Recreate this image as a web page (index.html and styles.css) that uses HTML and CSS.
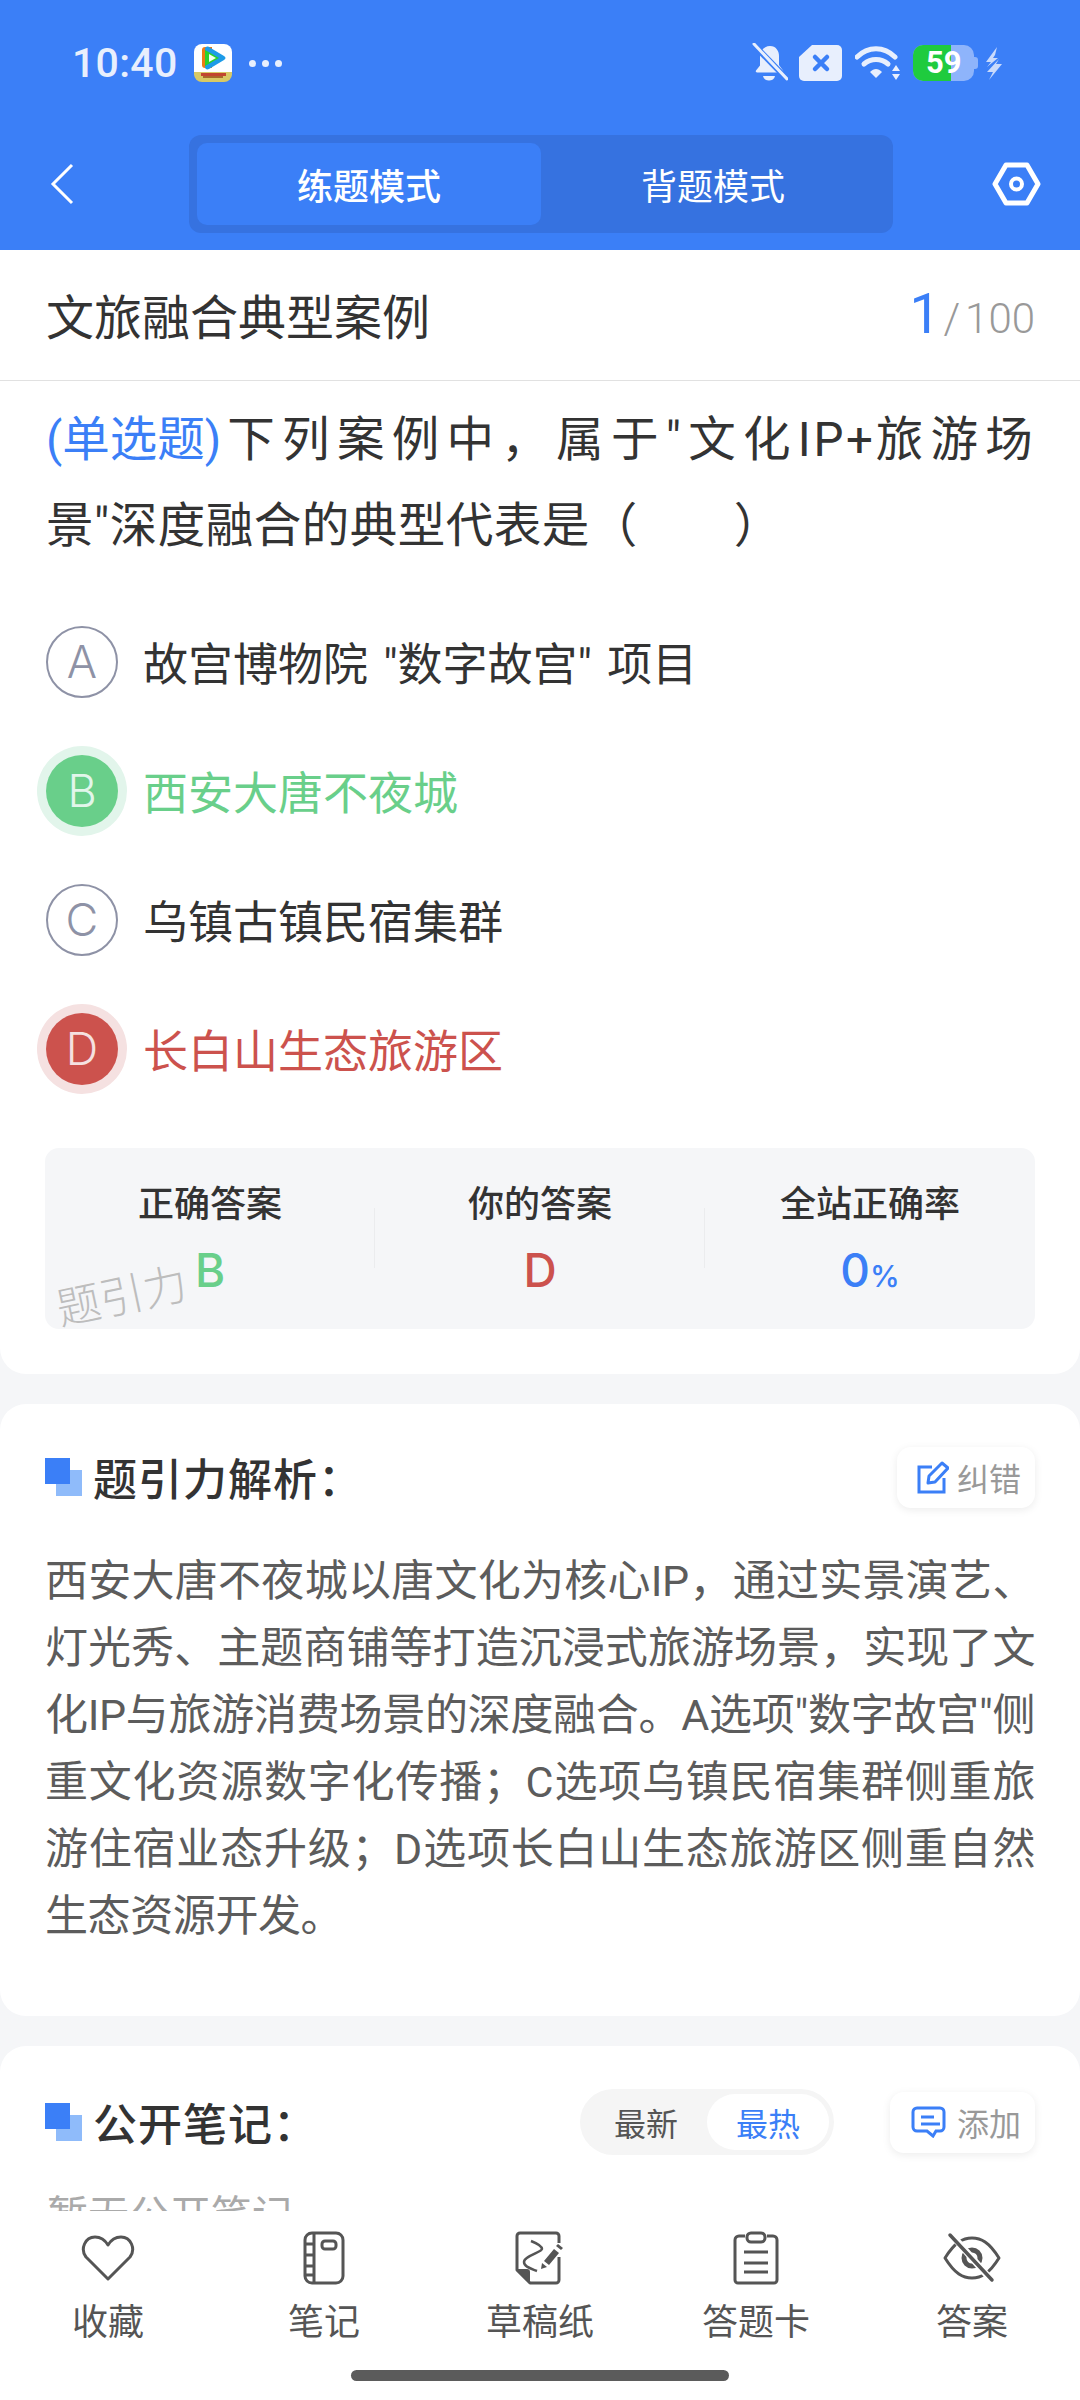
FILE: index.html
```html
<!DOCTYPE html>
<html lang="zh-CN">
<head>
<meta charset="utf-8">
<title>文旅融合典型案例</title>
<link rel="stylesheet" href="styles.css">
</head>
<body>
<div class="phone">
  <header class="top">
    <div class="status">
      <div class="status-left">
        <span class="time">10:40</span>
        <svg class="app-icon" width="38" height="38" viewBox="0 0 38 38"><rect width="38" height="36" rx="8" fill="#fff"/><path d="M0 28h38v2a8 8 0 0 1-8 8H8a8 8 0 0 1-8-8z" fill="#d8c964"/><path d="M11 3h7v21h-7a3 3 0 0 1-3-3V6a3 3 0 0 1 3-3z" fill="#ee7a14"/><path d="M11 5c0-2 2-3 4-2l15 9c2 1 2 3 0 4l-15 9c-2 1-4 0-4-2z" fill="#1d9be8"/><path d="M11 6l14 8-14 8z" fill="#2bd12b"/><path d="M15 10l7 4-7 4z" fill="#f4fff0"/><rect x="7" y="29" width="25" height="3" fill="#c2452f"/><rect x="9" y="32" width="20" height="2" fill="#a8682a"/></svg>
        <span class="dots"><i></i><i></i><i></i></span>
      </div>
      <div class="status-right">
        <svg width="36" height="40" viewBox="0 0 36 40"><path d="M18 3c6 0 9 5 9 10v9l4 5.500c.6 1 0 2-1 2H5c-1 0-1.600-1-1-2l4-5V13c0-5 4-10 10-10z" fill="#e8effd"/><path d="M11 33h12c-1 6-11 6-12 0z" fill="#e8effd"/><path d="M0 0l34 35" stroke="#3b7ff7" stroke-width="6"/><path d="M2 1l33 35" stroke="#e8effd" stroke-width="3" stroke-linecap="round"/></svg>
        <svg width="43" height="36" viewBox="0 0 43 36"><path d="M13 0h25a5 5 0 0 1 5 5v26a5 5 0 0 1-5 5H5a5 5 0 0 1-5-5V12z" fill="#e8effd"/><path d="M16 12l12 12M28 12L16 24" stroke="#3b7ff7" stroke-width="4.500" stroke-linecap="round"/></svg>
        <svg class="wifi" width="47" height="36" viewBox="0 0 47 36"><path d="M2 12c11-11 27-11 38 0" fill="none" stroke="#e8effd" stroke-width="5" stroke-linecap="round"/><path d="M9 19c7-6 17-6 24 0" fill="none" stroke="#e8effd" stroke-width="5" stroke-linecap="round"/><path d="M15 27c4-4 8-4 12 0l-6 6z" fill="#e8effd"/><path d="M41 20l4 6h-8zM41 35l4-6h-8z" fill="#e8effd"/></svg>
        <div class="battery"><div class="batt-body"><span class="batt-fill"></span></div><span class="batt-num">59</span></div>
        <svg class="bolt" width="17" height="33" viewBox="0 0 17 33"><path d="M12 0L1 15h5l-4 5 11-9H8l2-3zM14 12L2 25h6l-4 8 13-16h-6z" fill="#c9dafb"/></svg>
      </div>
    </div>
    <div class="nav">
      <svg class="back" width="24" height="42" viewBox="0 0 24 42"><path d="M22 2L3 21l19 19" fill="none" stroke="#fff" stroke-width="3"/></svg>
      <div class="tabs">
        <span class="tab tab-on">练题模式</span>
        <span class="tab">背题模式</span>
      </div>
      <svg class="gear" width="49" height="44" viewBox="0 0 49 44"><path d="M14 3h21l11 19-11 19H14L3 22z" fill="none" stroke="#fff" stroke-width="5" stroke-linejoin="round"/><circle cx="24.500" cy="22" r="5.500" fill="none" stroke="#fff" stroke-width="4"/></svg>
    </div>
  </header>

  <main class="content">
    <section class="card card-question">
      <div class="title-row">
        <span class="title">文旅融合典型案例</span>
        <span class="count"><b>1</b><i>/</i>100</span>
      </div>
      <p class="question"><span class="q-type">(单选题)</span><span class="q-first">下列案例中，属于"文化<span class="q-latin">IP+</span>旅游场</span><br>景"深度融合的典型代表是（　　）</p>
      <ul class="options">
        <li class="option"><span class="badge">A</span><span>故宫博物院 "数字故宫" 项目</span></li>
        <li class="option right"><span class="badge">B</span><span>西安大唐不夜城</span></li>
        <li class="option"><span class="badge">C</span><span>乌镇古镇民宿集群</span></li>
        <li class="option wrong"><span class="badge">D</span><span>长白山生态旅游区</span></li>
      </ul>
      <div class="stats">
        <div class="stat"><span class="stat-label">正确答案</span><span class="stat-val green">B</span></div>
        <div class="stat"><span class="stat-label">你的答案</span><span class="stat-val red">D</span></div>
        <div class="stat"><span class="stat-label">全站正确率</span><span class="stat-val blue">0<small>%</small></span></div>
        <span class="watermark">题引力</span>
      </div>
    </section>

    <section class="card card-analysis">
      <div class="head">
        <span class="mark"></span>
        <h2>题引力解析：</h2>
        <span class="chip">
          <svg width="32" height="33" viewBox="0 0 32 33"><path d="M15 6H2v25h25V17" fill="none" stroke="#3b7ff7" stroke-width="3"/><path d="M11 22l1-7L25 2l6 5-13 14z" fill="none" stroke="#3b7ff7" stroke-width="3" stroke-linejoin="round"/></svg>
          纠错
        </span>
      </div>
      <p class="analysis">西安大唐不夜城以唐文化为核心IP，通过实景演艺、灯光秀、主题商铺等打造沉浸式旅游场景，实现了文化IP与旅游消费场景的深度融合。A选项"数字故宫"侧重文化资源数字化传播；C选项乌镇民宿集群侧重旅游住宿业态升级；D选项长白山生态旅游区侧重自然生态资源开发。</p>
    </section>

    <section class="card card-notes">
      <div class="head">
        <span class="mark"></span>
        <h2>公开笔记：</h2>
        <div class="switch"><span>最新</span><span class="switch-on">最热</span></div>
        <span class="chip chip-add">
          <svg width="35" height="32" viewBox="0 0 35 32"><path d="M6 2h23a4 4 0 0 1 4 4v15a4 4 0 0 1-4 4h-4l-3 5-6-5H6a4 4 0 0 1-4-4V6a4 4 0 0 1 4-4z" fill="none" stroke="#3b7ff7" stroke-width="3"/><path d="M10 11h13M10 18h19" stroke="#3b7ff7" stroke-width="3"/></svg>
          添加
        </span>
      </div>
      <p class="empty">暂无公开笔记</p>
    </section>
  </main>

  <footer class="tools">
    <div class="tool">
      <svg width="54" height="48" viewBox="0 0 54 48"><path d="M27 45L5 23C-1 15 4 3 14 3c6 0 10 3 13 8 3-5 7-8 13-8 10 0 15 12 9 20z" fill="none" stroke="#555" stroke-width="3" stroke-linejoin="round"/></svg>
      <span>收藏</span>
    </div>
    <div class="tool">
      <svg width="44" height="54" viewBox="0 0 44 54"><rect x="3" y="2" width="38" height="50" rx="7" fill="none" stroke="#555" stroke-width="3"/><path d="M12 2v50M3 13h9M3 24h9M3 35h9M3 44h9" stroke="#555" stroke-width="3"/><rect x="20" y="10" width="14" height="8" rx="3" fill="none" stroke="#555" stroke-width="3"/></svg>
      <span>笔记</span>
    </div>
    <div class="tool">
      <svg width="50" height="54" viewBox="0 0 50 54"><path d="M44 12V5a3 3 0 0 0-3-3H5a3 3 0 0 0-3 3v34l13 13h26a3 3 0 0 0 3-3V26" fill="none" stroke="#555" stroke-width="3" stroke-linejoin="round"/><path d="M2 38h10a3 3 0 0 1 3 3v11z" fill="#555"/><path d="M16 10c5 2 11 5 11 8s-18 7-18 13c0 5 8 7 13 9" fill="none" stroke="#555" stroke-width="2.500"/><path d="M29 30l10-12 5 4-10 12zM27 32l5 4-6 2zM41 15l2-2 5 4-2 2z" fill="#555"/></svg>
      <span>草稿纸</span>
    </div>
    <div class="tool">
      <svg width="46" height="54" viewBox="0 0 46 54"><path d="M12 5H6a4 4 0 0 0-4 4v40a3 3 0 0 0 3 3h36a3 3 0 0 0 3-3V9a4 4 0 0 0-4-4h-6" fill="none" stroke="#555" stroke-width="3"/><rect x="14" y="2" width="18" height="9" rx="4" fill="none" stroke="#555" stroke-width="3"/><path d="M11 21h24M11 32h24M11 41h24" stroke="#555" stroke-width="3"/></svg>
      <span>答题卡</span>
    </div>
    <div class="tool">
      <svg width="58" height="48" viewBox="0 0 58 48"><path d="M2 24C12 8 20 4 29 4s17 4 27 20C46 40 38 44 29 44S12 40 2 24z" fill="none" stroke="#555" stroke-width="3" stroke-linejoin="round"/><circle cx="29" cy="24" r="8" fill="none" stroke="#555" stroke-width="5"/><path d="M8 0l41 47" stroke="#fff" stroke-width="7"/><path d="M7 1l42 45" stroke="#555" stroke-width="3.500" stroke-linecap="round"/></svg>
      <span>答案</span>
    </div>
  </footer>
  <div class="home-bar"><span></span></div>
</div>
</body>
</html>
```
FILE: styles.css
```css
* { box-sizing: border-box; }
html, body { margin: 0; padding: 0; }
body {
  width: 1080px;
  height: 2400px;
  overflow: hidden;
  background: #f5f6f8;
  font-family: "Noto Sans CJK SC", "Noto Sans", sans-serif;
  color: #333;
}
.phone { position: relative; width: 1080px; height: 2400px; display: flex; flex-direction: column; overflow: hidden; }

.top { height: 250px; flex: none; background: #3b7ff7; padding-top: 42px; }
.status { height: 42px; display: flex; justify-content: space-between; align-items: center; padding: 0 78px 0 72px; }
.status-left { display: flex; align-items: center; }
.time { font-family: Roboto, sans-serif; font-weight: 500; font-size: 41px; color: #e8effd; letter-spacing: .3px; }
.app-icon { margin-left: 16px; }
.dots { display: flex; gap: 6px; margin-left: 17px; }
.dots i { width: 7px; height: 7px; border-radius: 50%; background: #e8effd; }
.status-right { display: flex; align-items: center; gap: 11px; }
.wifi { margin-left: 2px; }
.bolt { margin-left: -4px; }
.battery { position: relative; width: 65px; height: 36px; }
.battery::after { content: ""; position: absolute; right: 0; top: 12px; width: 5px; height: 12px; border-radius: 0 3px 3px 0; background: #8eb4fb; }
.batt-body { width: 61px; height: 36px; background: #8eb4fb; border-radius: 10px; overflow: hidden; }
.batt-fill { display: block; width: 38px; height: 36px; background: #1fcb3e; }
.batt-num { position: absolute; left: 13px; top: 0; font: 700 31px/36px Roboto, sans-serif; color: #fff; }

.nav { display: flex; align-items: center; padding: 51px 0 0 50px; }
.back { flex: none; }
.tabs { flex: none; width: 704px; height: 98px; margin-left: 115px; background: #3672e0; border-radius: 12px; padding: 8px; display: flex; }
.tab { flex: 1; border-radius: 10px; display: flex; align-items: center; justify-content: center; color: #fff; font-size: 36px; }
.tab-on { background: #3b7ff7; font-weight: 500; }
.gear { flex: none; margin-left: 99px; }

.content { flex: 1; min-height: 0; overflow: hidden; display: flex; flex-direction: column; gap: 30px; }
.card { background: #fff; border-radius: 26px; flex: none; }
.card-question { height: 1124px; border-radius: 0 0 26px 26px; }
.title-row { height: 131px; padding: 0 45px 3px 46px; border-bottom: 1px solid #e1e1e1; display: flex; justify-content: space-between; align-items: center; }
.title { font-size: 48px; color: #333; }
.count { font-family: Roboto, sans-serif; font-size: 42px; color: #999; font-weight: 300; display: flex; align-items: baseline; }
.count b { font-size: 55px; color: #3b7ff7; font-weight: 400; }
.count i { margin: 0 5px 0 3px; font-style: normal; }
.question { margin: 16px 45px 0 46px; font-family: Roboto, "Noto Sans CJK SC", sans-serif; font-size: 47.500px; letter-spacing: .5px; line-height: 86px; color: #333; white-space: nowrap; }
.q-type { color: #3b7ff7; letter-spacing: 0; }
.q-first { letter-spacing: 7.300px; margin-left: 6px; }
.q-latin { letter-spacing: 2.700px; }
.options { list-style: none; margin: 28px 0 0; padding: 0 46px; }
.option { height: 129px; display: flex; align-items: center; font-family: Roboto, "Noto Sans CJK SC", sans-serif; font-size: 45px; word-spacing: 4px; color: #333; gap: 25px; }
.badge { width: 72px; height: 72px; flex: none; border-radius: 50%; border: 2px solid #8e92a6; color: #8e92a6; display: flex; align-items: center; justify-content: center; font-family: Inter, sans-serif; font-size: 45px; font-weight: 300; }
.right { color: #69cf8a; }
.right .badge { background: #69cf8a; border: 0; color: #e2f6ea; box-shadow: 0 0 0 9px #e2f5eb; }
.wrong { color: #cc524d; }
.wrong .badge { background: #cc524d; border: 0; color: #f5e1e1; box-shadow: 0 0 0 9px #f5e1e1; }

.stats { position: relative; margin: 35px 45px 0; height: 181px; background: #f5f6f8; border-radius: 14px; display: flex; align-items: center; }
.stat { flex: 1; height: 100%; display: flex; flex-direction: column; align-items: center; padding-top: 29px; position: relative; }
.stat + .stat::before { content: ""; position: absolute; left: -1px; top: 60px; height: 60px; width: 1px; background: #ebecee; }
.stat-label { font-size: 36px; font-weight: 500; color: #333; line-height: 48px; }
.stat-val { font-family: Inter, sans-serif; font-size: 46px; font-weight: 500; line-height: 48px; margin-top: 21px; }
.stat-val small { font-size: 30px; }
.green { color: #69cf8a; }
.red { color: #cc524d; }
.blue { color: #3b7ff7; }
.watermark { position: absolute; left: 10px; top: 120px; font-size: 44px; font-weight: 300; color: #bdbdbd; transform: rotate(-12deg); white-space: nowrap; line-height: 50px; }

.card-analysis { height: 612px; padding: 43px 45px 0; }
.card-notes { height: 300px; padding: 46px 45px 0; border-radius: 26px 26px 0 0; }
.head { display: flex; align-items: center; height: 60px; position: relative; }
.mark { position: relative; width: 37px; height: 38px; flex: none; }
.mark::before { content: ""; position: absolute; left: 11px; top: 12px; width: 26px; height: 26px; background: #8fbbfa; }
.mark::after { content: ""; position: absolute; left: 0; top: 0; width: 25px; height: 26px; background: #3b7ff7; }
.head h2 { margin: 0 0 0 11px; font-size: 44px; font-weight: 500; color: #333; letter-spacing: 1px; flex: 1; line-height: 60px; white-space: nowrap; }
.chip { display: flex; align-items: center; gap: 8px; height: 61px; padding: 0 14px 0 20px; font-size: 32px; color: #999; background: #fff; border-radius: 14px; box-shadow: 0 2px 8px rgba(0,0,0,.08); white-space: nowrap; }
.chip-add { gap: 11px; padding-left: 21px; }
.analysis { margin: 41px 0 0; font-family: Roboto, "Noto Sans CJK SC", sans-serif; font-size: 43px; letter-spacing: -.4px; line-height: 67px; color: #5c5c5c; text-align: justify; }
.switch { width: 254px; height: 66px; border-radius: 33px; background: #f5f5f5; display: flex; align-items: center; padding: 5px; margin-right: 56px; font-size: 32px; color: #555; }
.switch span { flex: 1; text-align: center; line-height: 56px; }
.switch-on { background: #fff; border-radius: 28px; color: #3b7ff7; }
.empty { margin: 30px 0 0 2px; font-size: 41px; color: #aaa; }

.tools { position: absolute; left: 0; top: 2211px; width: 1080px; height: 129px; background: #fff; display: grid; grid-template-columns: repeat(5, 1fr); }
.tool { display: flex; flex-direction: column; align-items: center; font-size: 36px; color: #555; }
.tool svg { height: 54px; margin-top: 20px; }
.tool span { margin-top: 11px; line-height: 46px; }
.home-bar { position: absolute; left: 0; top: 2340px; width: 1080px; height: 60px; background: #fff; display: flex; justify-content: center; padding-top: 30px; }
.home-bar span { width: 378px; height: 11px; border-radius: 6px; background: #5b5b5b; }
```
